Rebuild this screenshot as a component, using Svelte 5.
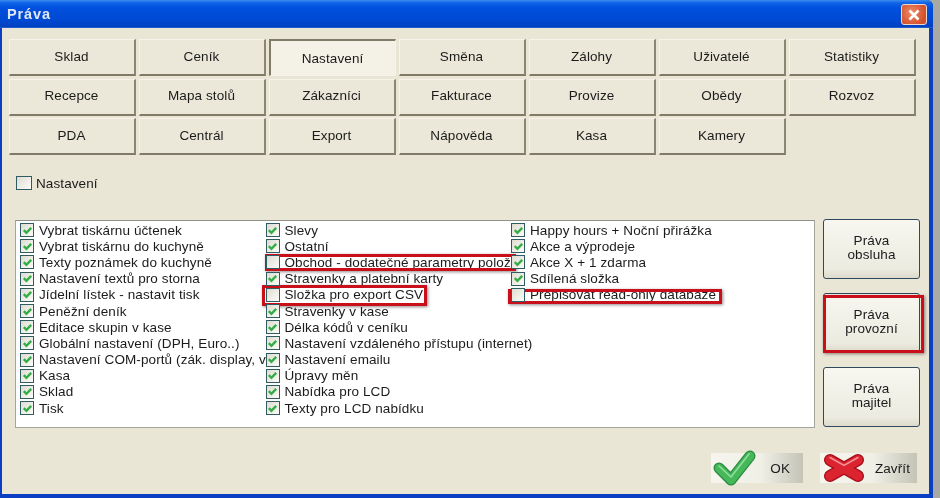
<script>
  const tabs = ['Sklad','Ceník','Nastavení','Směna','Zálohy','Uživatelé','Statistiky','Recepce','Mapa stolů','Zákazníci','Fakturace','Provize','Obědy','Rozvoz','PDA','Centrál','Export','Nápověda','Kasa','Kamery'];
  const cols = [
    [['Vybrat tiskárnu účtenek',1],['Vybrat tiskárnu do kuchyně',1],['Texty poznámek do kuchyně',1],['Nastavení textů pro storna',1],['Jídelní lístek - nastavit tisk',1],['Peněžní deník',1],['Editace skupin v kase',1],['Globální nastavení (DPH, Euro..)',1],['Nastavení COM-portů (zák. display, v',1],['Kasa',1],['Sklad',1],['Tisk',1]],
    [['Slevy',1],['Ostatní',1],['Obchod - dodatečné parametry polož',0],['Stravenky a platební karty',1],['Složka pro export CSV',0],['Stravenky v kase',1],['Délka kódů v ceníku',1],['Nastavení vzdáleného přístupu (internet)',1],['Nastavení emailu',1],['Úpravy měn',1],['Nabídka pro LCD',1],['Texty pro LCD nabídku',1]],
    [['Happy hours + Noční přirážka',1],['Akce a výprodeje',1],['Akce X + 1 zdarma',1],['Sdílená složka',1],['Přepisovat read-only databáze',0]]
  ];
  const sideButtons = [['Práva','obsluha'],['Práva','provozní'],['Práva','majitel']];
  const marks = [
    { l: 265, t: 254, w: 251, h: 17 },
    { l: 262, t: 285, w: 165, h: 21 },
    { l: 508, t: 289, w: 214, h: 15 },
    { l: 823, t: 295, w: 101, h: 58 }
  ];
</script>

<div class="page">
  <div class="window">
    <header class="title">
      <span>Práva</span>
      <button class="close" aria-label="Zavřít">
        <svg viewBox="0 0 16 16" width="16" height="16"><path d="M3.5 3.5 12.5 12.5M12.5 3.5 3.5 12.5" stroke="#fff" stroke-width="2.6" fill="none"/></svg>
      </button>
    </header>
    <main class="body">
      <section class="tabs">
        {#each tabs as t}
          <button class="tab" class:active={t === 'Nastavení'}>{t}</button>
        {/each}
      </section>

      <label class="master"><span class="box"></span>Nastavení</label>

      <section class="middle">
        <div class="list">
          {#each cols as col}
            <div class="col">
              {#each col as [text, on]}
                <div class="row">
                  <span class="box">
                    {#if on}
                      <svg viewBox="0 0 13 13" width="13" height="13"><path d="M2.8 6.2 5.4 8.8 10.2 3.8" stroke="#36ad46" stroke-width="2.4" fill="none"/></svg>
                    {/if}
                  </span>
                  <span class="label">{text}</span>
                </div>
              {/each}
            </div>
          {/each}
        </div>
        <div class="side">
          {#each sideButtons as [a, b]}
            <button class="sidebtn">{a}<br />{b}</button>
          {/each}
        </div>
      </section>

      <footer class="actions">
        <button class="action ok">
          <svg viewBox="0 0 46 38" width="46" height="38">
            <path d="M8 20 20 32 39 8" stroke="#2a8c40" stroke-width="11" stroke-linecap="round" stroke-linejoin="round" fill="none"/>
            <path d="M8 20 20 32 39 8" stroke="#46b85a" stroke-width="8.5" stroke-linecap="round" stroke-linejoin="round" fill="none"/>
            <path d="M8 18 20 29 38 6" stroke="#8fe09c" stroke-width="1.6" stroke-linecap="round" stroke-linejoin="round" fill="none"/>
          </svg>
          <span>OK</span>
        </button>
        <button class="action close-btn">
          <svg viewBox="0 0 42 30" width="42" height="30">
            <path d="M7 7 35 23M35 7 7 23" stroke="#a8101c" stroke-width="12" stroke-linecap="round" fill="none"/>
            <path d="M7 7 35 23M35 7 7 23" stroke="#dc2430" stroke-width="9.5" stroke-linecap="round" fill="none"/>
            <path d="M7 4.5 21 12.5 35 4.5" stroke="#f4949a" stroke-width="1.5" stroke-linecap="round" fill="none"/>
          </svg>
          <span>Zavřít</span>
        </button>
      </footer>
    </main>

    {#each marks as m}
      <div class="mark" style="left:{m.l}px;top:{m.t}px;width:{m.w}px;height:{m.h}px"></div>
    {/each}
  </div>
</div>

<style>
  :global(body) { margin: 0; background: #a8a8a4; overflow: hidden; }
  .page { width: 940px; height: 498px; overflow: hidden; filter: blur(0.35px); }
  .window {
    position: relative;
    box-sizing: border-box;
    width: 933px;
    height: 498px;
    display: flex;
    flex-direction: column;
    background: #0a3fc4;
    padding: 0 4px 4.5px 2px;
    font-family: "Liberation Sans", Arial, sans-serif;
    font-size: 13.5px;
    letter-spacing: 0.1px;
    color: #1b1b1b;
    border-top-right-radius: 6px;
  }
  .title {
    margin: 0 -4px 0 -2px;
    height: 28px;
    flex: none;
    box-sizing: border-box;
    display: flex;
    align-items: center;
    justify-content: space-between;
    padding: 0 6px 0 7px;
    background: linear-gradient(#3a8cf0 0, #0f62e6 3px, #0050de 8px, #0049d2 20px, #0040c0 27px, #3f78d8 28px);
    color: #dfe8f5;
    font-size: 14.5px;
    font-weight: bold;
    letter-spacing: 0.9px;
    border-top-right-radius: 6px;
  }
  .close {
    width: 26px;
    height: 21px;
    padding: 0;
    margin-top: 1px;
    display: flex;
    align-items: center;
    justify-content: center;
    border: 1px solid #f2d8cc;
    border-radius: 3px;
    background: radial-gradient(circle at 40% 40%, #ee8a68, #d2502c 75%);
  }
  .body {
    flex: 1;
    display: flex;
    flex-direction: column;
    background: #eae6d6;
    padding: 11px 7px 0 6.5px;
    min-height: 0;
  }
  .tabs {
    display: grid;
    grid-template-columns: repeat(7, 127px);
    grid-auto-rows: 37px;
    gap: 2.5px 3px;
  }
  button { font: inherit; color: inherit; letter-spacing: inherit; }
  .tab {
    padding: 0 0 2px;
    background: #ebe8d9;
    border: none;
    border-top: 1px solid #f6f4ea;
    border-left: 1px solid #f6f4ea;
    border-right: 2px solid #8a8674;
    border-bottom: 2px solid #7f7b68;
  }
  .tab.active {
    background: #f4f2e7;
    border-top: 2px solid #7f7b68;
    border-left: 2px solid #7f7b68;
    border-right: 1px solid #f6f4ea;
    border-bottom: 1px solid #f6f4ea;
    padding-top: 2px;
  }
  .master {
    margin: 20px 0 0 7.5px;
    height: 16px;
    display: flex;
    align-items: center;
    gap: 4px;
  }
  .box {
    box-sizing: border-box;
    flex: none;
    width: 14px;
    height: 14px;
    border: 1px solid #2f5c62;
    background: linear-gradient(135deg, #dedcd2, #fcfcf8);
    display: block;
  }
  .box svg { display: block; margin: -0.5px; }
  .master .box { width: 16px; height: 14px; }
  .middle {
    margin-top: 29px;
    display: flex;
    align-items: flex-start;
    gap: 8px;
  }
  .list {
    box-sizing: border-box;
    margin-left: 6.5px;
    width: 800px;
    height: 208px;
    display: grid;
    grid-template-columns: repeat(3, 245.5px);
    padding: 1px 0 0 4px;
    background: #fff;
    border: 1px solid #a4a69e;
    border-top-color: #8f918a;
  }
  .row {
    display: flex;
    align-items: center;
    gap: 5px;
    height: 16.2px;
    white-space: nowrap;
  }
  .col { min-width: 0; }
  .col .box { position: relative; z-index: 1; }
  .side {
    display: flex;
    flex-direction: column;
    gap: 14px;
    margin-top: -1px;
  }
  .sidebtn {
    box-sizing: border-box;
    width: 97px;
    height: 60px;
    padding: 0 0 3px;
    line-height: 14px;
    background: linear-gradient(#f8f7f0, #ecebe0 85%, #dcdacb);
    border: 1px solid #2f4a5c;
    border-radius: 3px;
  }
  .actions {
    margin-top: 25px;
    display: flex;
    justify-content: flex-end;
    gap: 17px;
    padding-right: 5px;
  }
  .action {
    height: 30px;
    padding: 0;
    border: none;
    display: flex;
    align-items: center;
    background: linear-gradient(90deg, #f6f6ee 0, #f0efe6 55%, #c4c3b6 100%);
    overflow: visible;
  }
  .ok { width: 92px; padding-right: 13px; justify-content: space-between; }
  .ok svg { margin: -3px 0 0 0; }
  .close-btn { width: 97px; padding-right: 7px; justify-content: space-between; }
  .close-btn svg { margin-left: 3px; }
  .mark {
    position: absolute;
    box-sizing: border-box;
    border: 3px solid #c80f1a;
    box-shadow: 1px 1px 3px rgba(60, 40, 40, 0.55);
    pointer-events: none;
  }
</style>
